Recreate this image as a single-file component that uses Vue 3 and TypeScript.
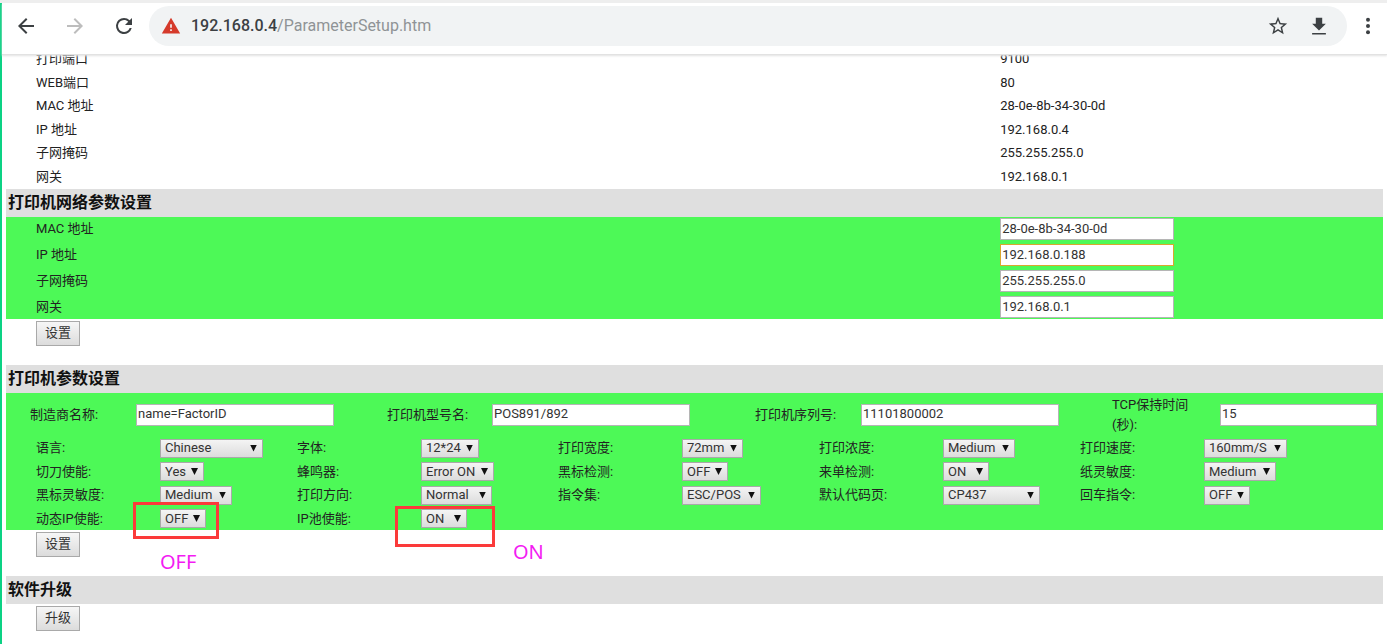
<script setup lang="ts">
import { ref } from 'vue'

interface InfoRow {
  label: string
  value: string
}

interface TextField {
  id: string
  label: string
  value: string
}

interface SelectField {
  id: string
  label: string
  value: string
  width: number
  note?: 'off' | 'on'
}

const info: InfoRow[] = [
  { label: '打印端口', value: '9100' },
  { label: 'WEB端口', value: '80' },
  { label: 'MAC 地址', value: '28-0e-8b-34-30-0d' },
  { label: 'IP 地址', value: '192.168.0.4' },
  { label: '子网掩码', value: '255.255.255.0' },
  { label: '网关', value: '192.168.0.1' },
]

const network = ref<TextField[]>([
  { id: 'mac', label: 'MAC 地址', value: '28-0e-8b-34-30-0d' },
  { id: 'ip', label: 'IP 地址', value: '192.168.0.188' },
  { id: 'mask', label: '子网掩码', value: '255.255.255.0' },
  { id: 'gateway', label: '网关', value: '192.168.0.1' },
])

const identity = ref<TextField[]>([
  { id: 'vendor', label: '制造商名称:', value: 'name=FactorID' },
  { id: 'model', label: '打印机型号名:', value: 'POS891/892' },
  { id: 'serial', label: '打印机序列号:', value: '11101800002' },
  { id: 'tcp', label: 'TCP保持时间(秒):', value: '15' },
])

const options = ref<SelectField[]>([
  { id: 'language', label: '语言:', value: 'Chinese', width: 103 },
  { id: 'font', label: '字体:', value: '12*24', width: 58 },
  { id: 'print-width', label: '打印宽度:', value: '72mm', width: 61 },
  { id: 'density', label: '打印浓度:', value: 'Medium', width: 72 },
  { id: 'speed', label: '打印速度:', value: '160mm/S', width: 83 },
  { id: 'cutter', label: '切刀使能:', value: 'Yes', width: 44 },
  { id: 'buzzer', label: '蜂鸣器:', value: 'Error ON', width: 73 },
  { id: 'black-mark', label: '黑标检测:', value: 'OFF', width: 46 },
  { id: 'order-check', label: '来单检测:', value: 'ON', width: 46 },
  { id: 'paper', label: '纸灵敏度:', value: 'Medium', width: 72 },
  { id: 'mark-level', label: '黑标灵敏度:', value: 'Medium', width: 72 },
  { id: 'direction', label: '打印方向:', value: 'Normal', width: 71 },
  { id: 'commands', label: '指令集:', value: 'ESC/POS', width: 79 },
  { id: 'codepage', label: '默认代码页:', value: 'CP437', width: 97 },
  { id: 'enter', label: '回车指令:', value: 'OFF', width: 46 },
  { id: 'dhcp', label: '动态IP使能:', value: 'OFF', width: 46, note: 'off' },
  { id: 'ip-pool', label: 'IP池使能:', value: 'ON', width: 46, note: 'on' },
])
</script>

<template>
  <div class="window">
    <header class="toolbar">
      <button class="tool" type="button" aria-label="Back">
        <svg viewBox="0 0 24 24"><path d="M20 11H7.83l5.59-5.59L12 4l-8 8 8 8 1.41-1.41L7.83 13H20z" /></svg>
      </button>
      <button class="tool faded" type="button" aria-label="Forward">
        <svg viewBox="0 0 24 24"><path d="M12 4l-1.41 1.41L16.17 11H4v2h12.17l-5.58 5.59L12 20l8-8z" /></svg>
      </button>
      <button class="tool" type="button" aria-label="Reload">
        <svg viewBox="0 0 24 24"><path d="M17.65 6.35A7.96 7.96 0 0 0 12 4a8 8 0 1 0 7.73 10h-2.08A6 6 0 1 1 12 6c1.66 0 3.14.69 4.22 1.78L13 11h7V4z" /></svg>
      </button>
      <div class="address">
        <svg class="warn" viewBox="0 0 24 24"><path d="M1 21h22L12 2zm12-3h-2v-2h2zm0-4h-2v-4h2z" /></svg>
        <span class="url"><b>192.168.0.4</b>/ParameterSetup.htm</span>
        <button class="tool" type="button" aria-label="Bookmark">
          <svg viewBox="0 0 24 24"><path d="M22 9.24l-7.19-.62L12 2 9.19 8.63 2 9.24l5.46 4.73L5.82 21 12 17.27 18.18 21l-1.63-7.03zM12 15.4l-3.76 2.27 1-4.28-3.32-2.88 4.38-.38L12 6.1l1.71 4.04 4.38.38-3.32 2.88 1 4.28z" /></svg>
        </button>
        <button class="tool" type="button" aria-label="Download">
          <svg viewBox="0 0 24 24"><path d="M8.500 3h7v6.500h4L12 17 4.500 9.500h4zM4.500 19.500h15v1.800h-15z" /></svg>
        </button>
      </div>
      <button class="tool menu" type="button" aria-label="Menu">
        <svg viewBox="0 0 24 24"><circle cx="12" cy="5.800" r="2" /><circle cx="12" cy="12" r="2" /><circle cx="12" cy="18.200" r="2" /></svg>
      </button>
    </header>

    <main class="page">
      <table class="info">
        <tbody>
          <tr v-for="row in info" :key="row.label">
            <th scope="row">{{ row.label }}</th>
            <td>{{ row.value }}</td>
          </tr>
        </tbody>
      </table>

      <h2>打印机网络参数设置</h2>
      <form @submit.prevent>
        <div class="panel network">
          <div v-for="field in network" :key="field.id" class="network-row">
            <label :for="field.id">{{ field.label }}</label>
            <input :id="field.id" v-model="field.value" type="text" :class="{ active: field.id === 'ip' }" />
          </div>
        </div>
        <div class="actions"><button class="push" type="submit">设置</button></div>
      </form>

      <h2>打印机参数设置</h2>
      <form @submit.prevent>
        <div class="panel">
          <div class="identity">
            <template v-for="field in identity" :key="field.id">
              <label :for="field.id">{{ field.label }}</label>
              <input :id="field.id" v-model="field.value" type="text" />
            </template>
          </div>
          <div class="options">
            <template v-for="field in options" :key="field.id">
              <label :for="field.id">{{ field.label }}</label>
              <div class="choice">
                <span class="drop">
                  <select :id="field.id" v-model="field.value" :style="{ width: field.width + 'px' }">
                    <option>{{ field.value }}</option>
                  </select>
                </span>
                <template v-if="field.note">
                  <span class="frame" :class="field.note"></span>
                  <span class="note" :class="field.note">{{ field.value }}</span>
                </template>
              </div>
            </template>
          </div>
        </div>
        <div class="actions"><button class="push" type="submit">设置</button></div>
      </form>

      <h2>软件升级</h2>
      <div class="actions"><button class="push" type="button">升级</button></div>
    </main>
  </div>
</template>

<style>
body {
  background: #fff;
  overflow: hidden;
}
</style>

<style scoped>
* {
  box-sizing: border-box;
}

.window {
  display: flex;
  flex-direction: column;
  height: 100vh;
  overflow: hidden;
  border-top: 3px solid #eee;
  background: linear-gradient(#0cd284, #0cd284) left / 2px 100% no-repeat #fff;
  color: #222;
  font: 13px/20px Roboto, "Noto Sans CJK SC", sans-serif;
}

.toolbar {
  flex: none;
  display: flex;
  align-items: center;
  height: 52px;
  padding: 0 7px 5px 12px;
  margin-left: 2px;
  background: #fff;
  border-bottom: 1px solid #e2e2e2;
  box-shadow: 0 1px 2px #e2e2e2;
  position: relative;
}

.tool {
  flex: none;
  width: 24px;
  height: 24px;
  margin-right: 25px;
  padding: 0;
  border: 0;
  background: none;
  color: #3c4043;
  display: grid;
  place-items: center;
}

.tool svg {
  width: 24px;
  height: 24px;
  fill: currentColor;
}

.tool.faded {
  color: #bdbdbd;
}

.address {
  flex: 1;
  display: flex;
  align-items: center;
  height: 40px;
  margin-left: -12px;
  padding: 0 16px 0 12px;
  border-radius: 20px;
  background: #f1f3f4;
}

.address .tool {
  margin: 0 0 0 17px;
}

.address .tool svg {
  width: 22px;
  height: 22px;
}

.warn {
  width: 20px;
  height: 20px;
  margin-right: 10px;
  fill: #d53a2b;
}

.url {
  flex: 1;
  color: #8f9396;
  font-size: 16px;
}

.url b {
  color: #3c4043;
  font-weight: 500;
}

.tool.menu {
  margin: 0 0 0 9px;
}

.page {
  flex: 1;
  min-height: 0;
  overflow: hidden;
  padding: 0 4px 0 6px;
}

.info {
  width: 100%;
  height: 141px;
  margin-top: -7px;
  border-collapse: collapse;
  table-layout: fixed;
}

.info th,
.info td {
  padding: 0 0 1px;
  text-align: left;
  font-weight: 400;
}

.info th {
  width: 72.2%;
  padding-left: 30px;
}

h2 {
  margin: 0;
  padding-left: 2px;
  background: #dfdfdf;
  color: #111;
  font-size: 16px;
  line-height: 28px;
  font-weight: 700;
}

form {
  margin: 0;
}

.panel {
  background: #4df957;
}

.network {
  display: grid;
  gap: 2px;
}

.network-row {
  display: grid;
  grid-template-columns: 72.2% 174px;
  align-items: center;
  height: 24px;
}

.network-row label {
  padding-left: 30px;
}

input {
  width: 100%;
  height: 22px;
  padding: 0 1px 2px;
  border: 1px solid #b5b5b5;
  border-radius: 0;
  background: #fff;
  color: #333;
  font: inherit;
  outline: 0;
}

input.active {
  border-color: #d9a62e;
}

.identity {
  display: grid;
  grid-template-columns: 106fr 251fr 105fr 263fr 106fr 251fr 108fr 157fr;
  align-items: center;
  height: 43px;
  padding: 0 6px 0 24px;
}

.identity label {
  padding-right: 20px;
}

.identity input {
  max-width: 198px;
}

.options {
  display: grid;
  grid-template-columns: repeat(5, 124fr 137fr);
  grid-template-rows: 24px 23px 24px 23px;
  align-items: center;
  padding: 0 42px 0 30px;
}

.choice {
  position: relative;
  display: flex;
}

.drop {
  position: relative;
}

.drop::after {
  content: "";
  position: absolute;
  top: 6px;
  right: 6px;
  width: 7px;
  height: 7px;
  background: #111;
  clip-path: polygon(0 0, 100% 0, 50% 100%);
  pointer-events: none;
}

select {
  appearance: none;
  display: block;
  height: 19px;
  padding: 0 0 0 4px;
  border: 1px solid #a9a9a9;
  border-radius: 0;
  background: linear-gradient(#f4f4f4, #dcdcdc);
  color: #333;
  font: inherit;
  line-height: 16px;
}

.frame {
  position: absolute;
  border: 3px solid #fb3a3a;
  pointer-events: none;
}

.frame.off {
  top: -7px;
  left: -27px;
  width: 86px;
  height: 37px;
}

.frame.on {
  top: -3px;
  left: -26px;
  width: 100px;
  height: 41px;
}

.note {
  position: absolute;
  color: #f31cf3;
  font: 20px/24px "Noto Sans", sans-serif;
}

.note.off {
  top: 41px;
  left: 0;
}

.note.on {
  top: 31px;
  left: 92px;
}

.actions {
  padding: 2px 0 19px 30px;
}

.push {
  display: block;
  height: 25px;
  padding: 0 8px 1px;
  border: 1px solid #a9a9a9;
  border-radius: 0;
  background: linear-gradient(#f6f6f6, #dcdcdc);
  color: #333;
  font: inherit;
}
</style>
